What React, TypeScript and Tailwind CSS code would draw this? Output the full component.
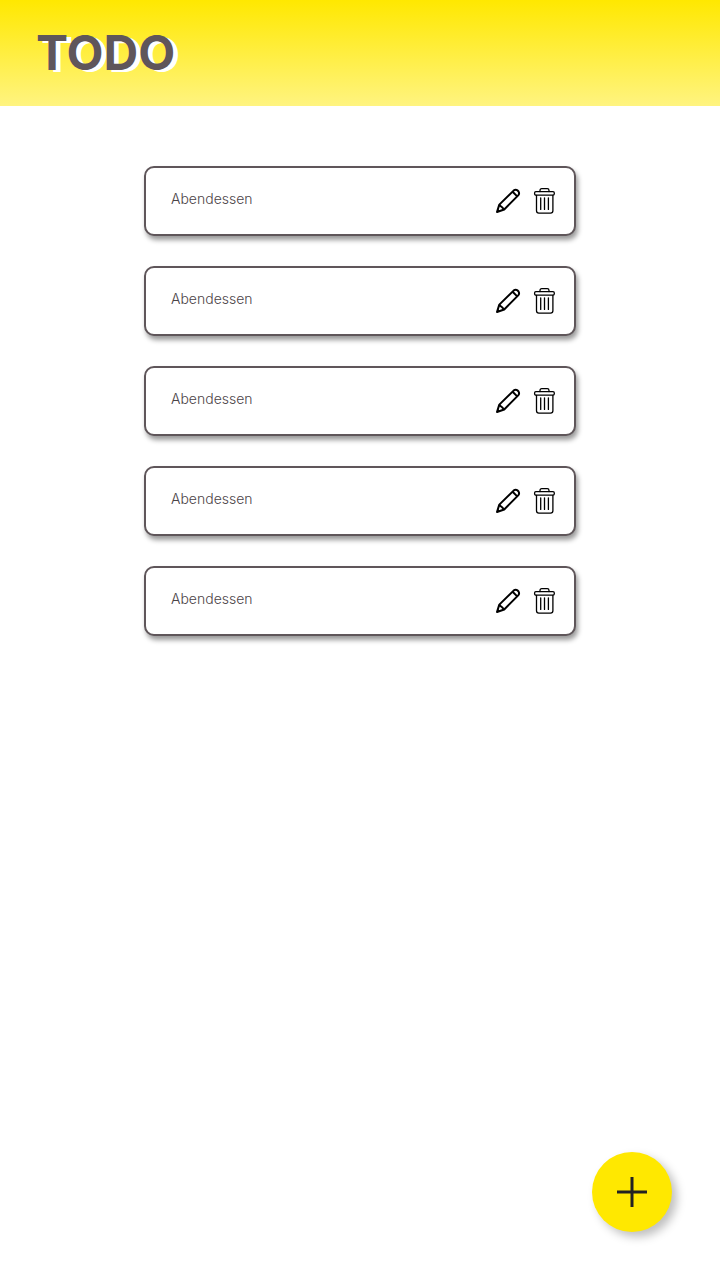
type Todo = { id: number; title: string };

const todos: Todo[] = [
  { id: 1, title: "Abendessen" },
  { id: 2, title: "Abendessen" },
  { id: 3, title: "Abendessen" },
  { id: 4, title: "Abendessen" },
  { id: 5, title: "Abendessen" },
];

function PencilIcon() {
  return (
    <svg viewBox="0 0 26 26" className="size-[26px]" fill="none" stroke="#000" strokeWidth="2" strokeLinejoin="round" aria-hidden="true">
      <path d="M2 24 4.3 16.6 18.6 2.6Q20.5 1 22.5 2.3L23.5 3.5Q24.8 5.5 23.2 7.4L9.2 21.5Z" />
      <path d="M17.6 3.8 22.2 8.4M4.6 16.6Q5.2 18.6 6.4 18.6Q7.6 19.8 9 21.4" />
      <path d="M2 24 2.8 20.8 5.1 23.1Z" fill="#000" stroke="none" />
    </svg>
  );
}

function TrashIcon() {
  return (
    <svg viewBox="0 0 22 26" className="h-[26px] w-[22px]" fill="none" stroke="#000" strokeWidth="1.3" strokeLinejoin="round" strokeLinecap="round" aria-hidden="true">
      <path d="M7 3.6V2.4Q7 .7 8.7 .7H14.3Q16 .7 16 2.4V3.6" />
      <rect x="1.6" y="3.7" width="19.7" height="3.4" rx="1.3" />
      <path d="M3.5 7.4V22.8Q3.5 25.2 5.9 25.2H17.5Q19.9 25.2 19.9 22.8V7.4" />
      <path d="M7.7 9.8V21.4M11.5 9.8V21.4M15.4 9.8V21.4" />
    </svg>
  );
}

function TodoCard({ todo }: { todo: Todo }) {
  return (
    <li className="flex h-[70px] items-center justify-between rounded-[10px] border-2 border-[#5f565a] bg-white pr-[19px] pl-[25px] shadow-[2px_4px_5px_rgba(0,0,0,0.4)]">
      <span className="pb-1 text-sm font-light text-[#4b4347]">{todo.title}</span>
      <div className="flex gap-3">
        <button type="button" aria-label="Bearbeiten">
          <PencilIcon />
        </button>
        <button type="button" aria-label="Löschen">
          <TrashIcon />
        </button>
      </div>
    </li>
  );
}

export default function App() {
  return (
    <div className="min-h-screen bg-white font-['Inter',sans-serif]">
      <header className="bg-linear-to-b/srgb from-[#ffe800] to-[#fff480] px-9 py-6">
        <h1 className="text-[48px] leading-[58px] font-bold text-[#5f565a] [text-shadow:5px_2px_0_#fff]">TODO</h1>
      </header>
      <main>
        <ul className="mx-auto mt-[60px] flex w-3/5 flex-col gap-[30px]">
          {todos.map((todo) => (
            <TodoCard key={todo.id} todo={todo} />
          ))}
        </ul>
      </main>
      <button
        type="button"
        aria-label="Hinzufügen"
        className="fixed right-12 bottom-12 flex size-20 items-center justify-center rounded-full bg-[#ffe800] shadow-[5px_5px_10px_rgba(0,0,0,0.25)]"
      >
        <svg viewBox="0 0 30 30" className="size-[30px]" stroke="#222" strokeWidth="3" aria-hidden="true">
          <path d="M15 0V30M0 15H30" />
        </svg>
      </button>
    </div>
  );
}
